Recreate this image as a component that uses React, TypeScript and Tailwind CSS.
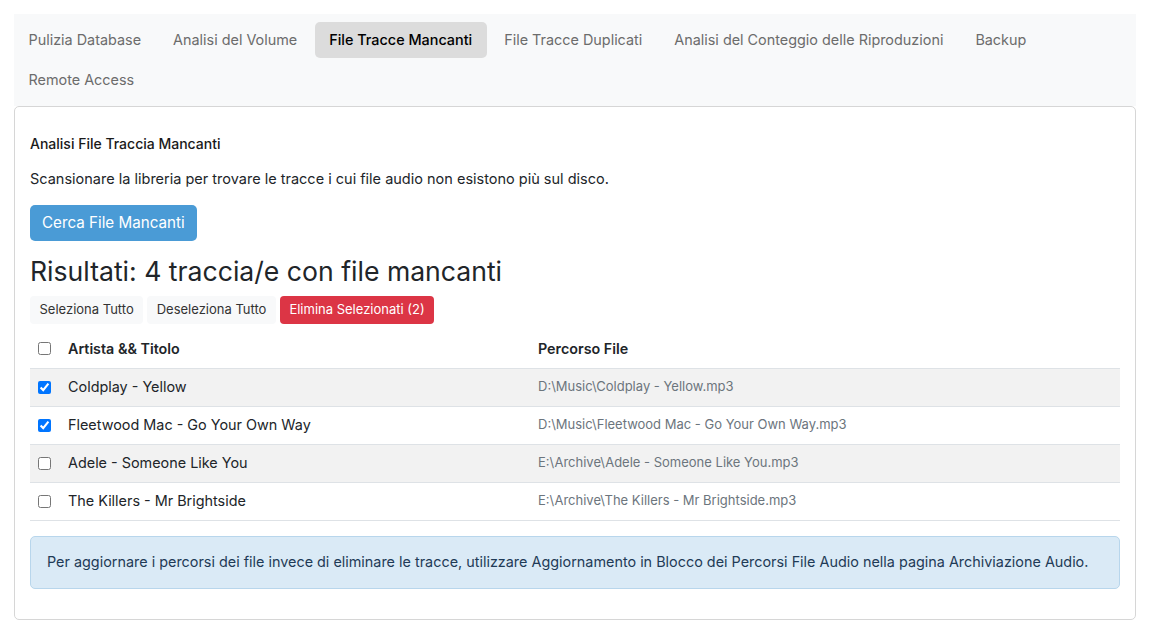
import { useState } from "react";

const tabs = [
  "Pulizia Database",
  "Analisi del Volume",
  "File Tracce Mancanti",
  "File Tracce Duplicati",
  "Analisi del Conteggio delle Riproduzioni",
  "Backup",
  "Remote Access",
];

const tracks = [
  { title: "Coldplay - Yellow", path: "D:\\Music\\Coldplay - Yellow.mp3", checked: true },
  { title: "Fleetwood Mac - Go Your Own Way", path: "D:\\Music\\Fleetwood Mac - Go Your Own Way.mp3", checked: true },
  { title: "Adele - Someone Like You", path: "E:\\Archive\\Adele - Someone Like You.mp3", checked: false },
  { title: "The Killers - Mr Brightside", path: "E:\\Archive\\The Killers - Mr Brightside.mp3", checked: false },
];

export default function App() {
  const [sel, setSel] = useState(tracks.map((t) => t.checked));
  const count = sel.filter(Boolean).length;

  return (
    <div className="min-h-screen bg-white p-[14px] font-['Inter','Noto_Sans',sans-serif] text-[#212529]">
      {/* Tabs */}
      <nav className="flex flex-wrap gap-x-[3px] gap-y-1 bg-[#f8f9fa] py-2">
        {tabs.map((t) => {
          const active = t === "File Tracce Mancanti";
          return (
            <button
              key={t}
              className={
                active
                  ? "h-9 rounded-[5px] bg-[#dcdcdc] px-[14.5px] text-[14.4px] font-medium text-black"
                  : "h-9 rounded-[5px] px-[14.5px] text-[14.4px] text-[#6c6c6c]"
              }
            >
              {t}
            </button>
          );
        })}
      </nav>

      {/* Card */}
      <div className="rounded-[5px] border border-[#d6d6d6] px-[15px] pb-[30px] pt-[27px]">
        <h6 className="text-[14px] leading-5 font-medium text-[#1a1a1a]">Analisi File Traccia Mancanti</h6>
        <p className="mt-[13px] text-[14.5px] leading-6">
          Scansionare la libreria per trovare le tracce i cui file audio non esistono più sul disco.
        </p>
        <button className="mt-[14px] h-9 rounded-[5px] bg-[#4a9bd6] px-3 text-[15.2px] text-white">
          Cerca File Mancanti
        </button>
        <h3 className="mt-[14px] text-[26.6px] leading-8">
          Risultati: {tracks.length} traccia/e con file mancanti
        </h3>
        <div className="mt-[9px] flex gap-1">
          <button
            className="h-7 rounded bg-[#f8f9fa] px-[9.5px] text-[13px] text-[#333]"
            onClick={() => setSel(sel.map(() => true))}
          >
            Seleziona Tutto
          </button>
          <button
            className="h-7 rounded bg-[#f8f9fa] px-[9.5px] text-[13px] text-[#333]"
            onClick={() => setSel(sel.map(() => false))}
          >
            Deseleziona Tutto
          </button>
          <button className="h-7 rounded bg-[#dc3545] px-[9.5px] text-[13px] text-white">
            Elimina Selezionati ({count})
          </button>
        </div>

        <table className="mt-[6px] w-full border-collapse text-left">
          <thead>
            <tr className="h-[38px] border-b border-[#dee2e6]">
              <th className="w-[30px] pl-2">
                <input type="checkbox" className="block h-[13px] w-[13px] accent-[#0075ff]" />
              </th>
              <th className="w-[470px] px-2 text-[14.3px] font-semibold">Artista &amp;&amp; Titolo</th>
              <th className="px-2 text-[14.3px] font-semibold">Percorso File</th>
            </tr>
          </thead>
          <tbody>
            {tracks.map((t, i) => (
              <tr
                key={t.path}
                className={
                  i % 2 === 0
                    ? "h-[38px] border-b border-[#dee2e6] bg-[#f2f2f2]"
                    : "h-[38px] border-b border-[#dee2e6]"
                }
              >
                <td className="pl-2">
                  <input
                    type="checkbox"
                    checked={sel[i]}
                    onChange={() => setSel(sel.map((v, j) => (j === i ? !v : v)))}
                    className="block h-[13px] w-[13px] accent-[#0075ff]"
                  />
                </td>
                <td className="px-2 text-[14.4px]">{t.title}</td>
                <td className="px-2 text-[13px] text-[#6c757d]">{t.path}</td>
              </tr>
            ))}
          </tbody>
        </table>

        <div className="mt-[15px] flex h-[53px] items-center rounded-[5px] border border-[#b8d6ec] bg-[#daeaf6] px-4 text-[14.4px] text-[#1f3b57]">
          Per aggiornare i percorsi dei file invece di eliminare le tracce, utilizzare Aggiornamento in Blocco dei Percorsi File
          Audio nella pagina Archiviazione Audio.
        </div>
      </div>
    </div>
  );
}
